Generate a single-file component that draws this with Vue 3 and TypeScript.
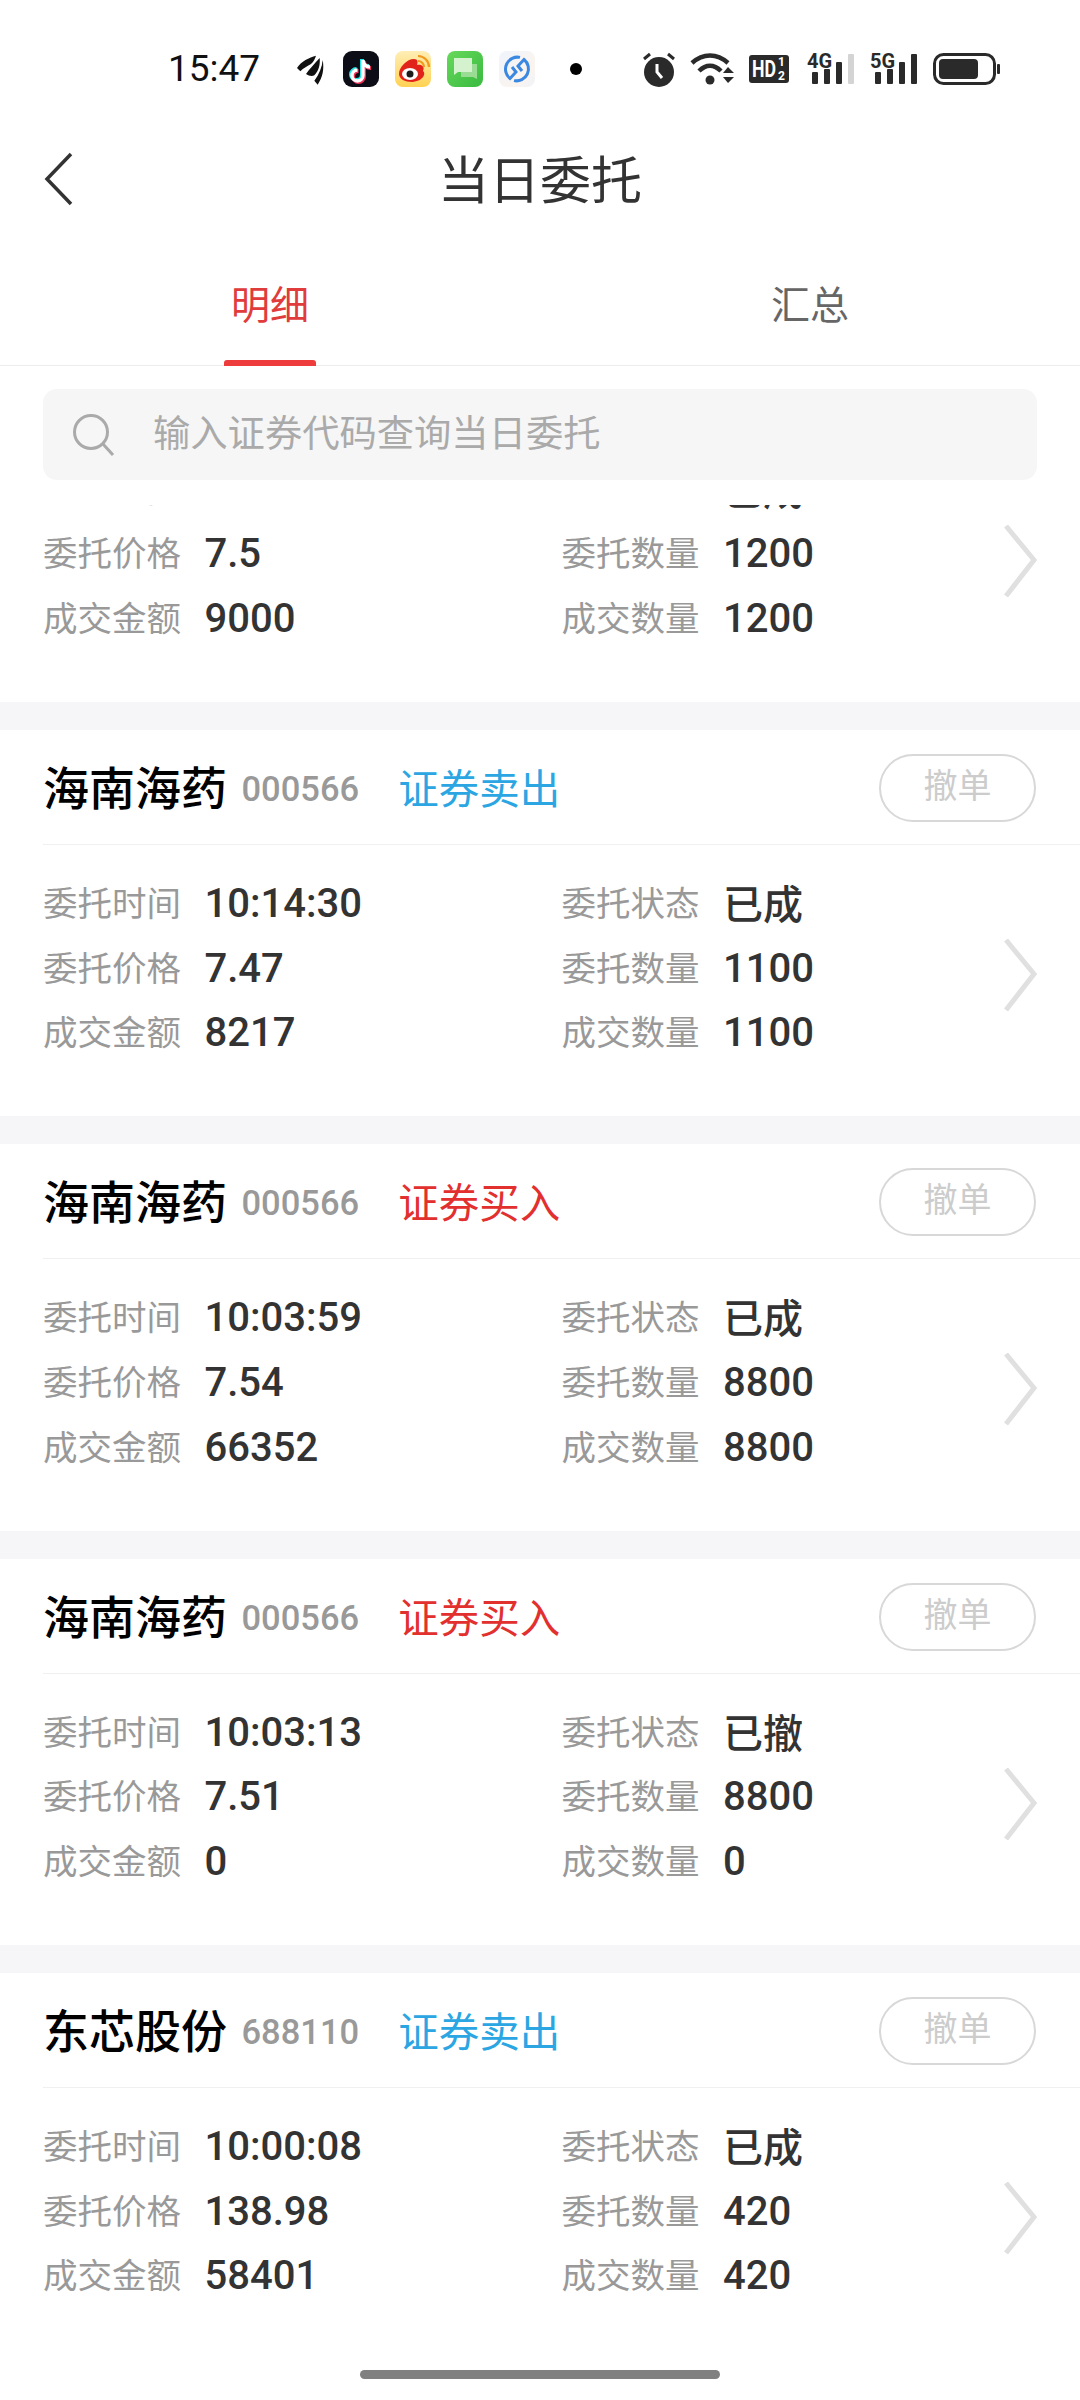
<template>
  <div class="page">
    <div class="status-bar">
      <span class="clock">15:47</span>
      <svg class="ic-bird" width="30" height="34" viewBox="0 0 90 100">
        <path d="M3 47C15 27 40 15 60 10C57 20 53 27 45 35C35 41 22 47 13 57Z" fill="#111" />
        <path d="M30 65C40 50 55 35 71 17C73 35 69 55 55 69C47 73 38 70 30 65Z" fill="#111" />
        <path d="M55 85C70 65 78 45 80 23C85 50 80 75 65 97Z" fill="#111" />
      </svg>
      <svg class="ic-app ic-tiktok" width="36" height="36" viewBox="0 0 36 36">
        <rect width="36" height="36" rx="9" fill="#0d0d17" />
        <path d="M19 8V23.5a5.5 5.5 0 1 1-5.5-5.5M19 8c0 4 3 7 7 7" fill="none" stroke="#25e6e6" stroke-width="4" />
        <path d="M21 10V25.5a5.5 5.5 0 1 1-5.5-5.5M21 10c0 4 3 7 7 7" fill="none" stroke="#f0305a" stroke-width="4" />
        <path d="M20 9V24.5a5.5 5.5 0 1 1-5.5-5.5M20 9c0 4 3 7 7 7" fill="none" stroke="#fff" stroke-width="3.4" />
      </svg>
      <svg class="ic-app" width="36" height="36" viewBox="0 0 36 36">
        <defs>
          <linearGradient id="wb" x1="0" y1="0" x2="0" y2="1">
            <stop offset="0" stop-color="#ffeeb5" />
            <stop offset="1" stop-color="#ffd253" />
          </linearGradient>
        </defs>
        <rect width="36" height="36" rx="8" fill="url(#wb)" />
        <path d="M4 23C4 16 12 8 19 8C23 8 23 11 22 14C27 13 30 16 28 20C31 22 29 30 17 31C10 31 4 28 4 23Z" fill="#e2231a" />
        <ellipse cx="15" cy="23" rx="8" ry="6" fill="#fff" />
        <circle cx="15" cy="23" r="3.5" fill="#1c1c1c" />
        <path d="M23 10a6 6 0 0 1 6 6M23 5a11 11 0 0 1 11 11" fill="none" stroke="#f29a1f" stroke-width="2.2" />
      </svg>
      <svg class="ic-app" width="36" height="36" viewBox="0 0 36 36">
        <defs>
          <linearGradient id="ms" x1="0" y1="0" x2="1" y2="1">
            <stop offset="0" stop-color="#66d95c" />
            <stop offset="1" stop-color="#39ba3f" />
          </linearGradient>
        </defs>
        <rect width="36" height="36" rx="8" fill="url(#ms)" />
        <path d="M14 13H30V28L26 26H14Z" fill="#9bdc94" />
        <path d="M7 7H25V21H11L7 24Z" fill="#d3f2cd" />
      </svg>
      <svg class="ic-app" width="36" height="36" viewBox="0 0 36 36">
        <defs>
          <linearGradient id="bl" x1="0" y1="0" x2="1" y2="1">
            <stop offset="0" stop-color="#eff4fd" />
            <stop offset="0.7" stop-color="#fbf4ee" />
            <stop offset="1" stop-color="#eef3fb" />
          </linearGradient>
        </defs>
        <rect width="36" height="36" rx="8" fill="url(#bl)" />
        <path d="M21 6.4A12 12 0 0 0 11 27.5L17 21L13 16" fill="none" stroke="#3b88e2" stroke-width="3" />
        <path d="M15 29.6A12 12 0 0 0 25 8.5L19 15L23 20" fill="none" stroke="#3b88e2" stroke-width="3" />
      </svg>
      <span class="dot"></span>
      <svg class="ic-alarm" width="32" height="35" viewBox="0 0 32 35">
        <circle cx="16" cy="20" r="15" fill="#2a2a2a" />
        <path d="M1 7L7 2M31 7L25 2" stroke="#2a2a2a" stroke-width="3" />
        <path d="M14 12V20L19 26" fill="none" stroke="#fff" stroke-width="3" />
      </svg>
      <svg class="ic-wifi" width="46" height="34" viewBox="0 0 46 34">
        <path d="M2 11C13 1 27 1 38 11M9 19C16 12 24 12 31 19" fill="none" stroke="#2a2a2a" stroke-width="4.5" />
        <circle cx="20" cy="28" r="4.5" fill="#2a2a2a" />
        <path d="M33 21L38 15L44 21ZM33 25H44L38 31Z" fill="#2a2a2a" />
      </svg>
      <svg class="ic-hd" width="40" height="28" viewBox="0 0 40 28">
        <rect width="40" height="28" rx="3" fill="#2a2a2a" />
        <text x="3" y="22" class="hd-text" textLength="24" lengthAdjust="spacingAndGlyphs">HD</text>
        <text x="29" y="10.5" class="hd-sub">1</text>
        <text x="29" y="25" class="hd-sub">2</text>
      </svg>
      <svg class="ic-signal" width="47" height="33" viewBox="0 0 47 33">
        <text x="-1" y="15" class="net-text">4G</text>
        <rect x="4" y="19" width="6" height="12" rx="1" fill="#2a2a2a" />
        <rect x="16" y="16" width="6" height="15" rx="1" fill="#2a2a2a" />
        <rect x="28" y="9" width="6" height="22" rx="1" fill="#2a2a2a" />
        <rect x="40" y="1" width="6" height="30" rx="1" fill="#d4d4d4" />
      </svg>
      <svg class="ic-signal ic-signal-5g" width="47" height="33" viewBox="0 0 47 33">
        <text x="-1" y="15" class="net-text">5G</text>
        <rect x="4" y="19" width="6" height="12" rx="1" fill="#2a2a2a" />
        <rect x="16" y="16" width="6" height="15" rx="1" fill="#2a2a2a" />
        <rect x="28" y="9" width="6" height="22" rx="1" fill="#2a2a2a" />
        <rect x="40" y="1" width="6" height="30" rx="1" fill="#2a2a2a" />
      </svg>
      <svg class="ic-battery" width="67" height="32" viewBox="0 0 67 32">
        <rect x="1.5" y="1.5" width="60" height="29" rx="9" fill="none" stroke="#2a2a2a" stroke-width="3" />
        <rect x="6" y="6" width="39" height="20" rx="4" fill="#2a2a2a" />
        <rect x="64" y="11" width="3" height="10" rx="1" fill="#2a2a2a" />
      </svg>
    </div>

    <div class="nav-bar">
      <svg class="back" width="30" height="54" viewBox="0 0 30 54">
        <path d="M27 2L3 27L27 52" fill="none" stroke="#333" stroke-width="3.5" />
      </svg>
      <h1 class="title">当日委托</h1>
    </div>

    <div class="tabs">
      <div class="tab active">明细</div>
      <div class="tab">汇总</div>
    </div>

    <div class="search-wrap">
      <div class="search">
        <svg class="search-icon" width="42" height="42" viewBox="0 0 42 42">
          <circle cx="18" cy="18" r="16.5" fill="none" stroke="#aaa" stroke-width="3" />
          <path d="M30 30L40 41" stroke="#aaa" stroke-width="3" />
        </svg>
        <span class="placeholder">输入证券代码查询当日委托</span>
      </div>
    </div>

    <div class="list">
      <div class="list-inner">
        <div v-for="(o, i) in orders" :key="i" class="card">
          <div class="card-head">
            <span class="name">{{ o.name }}</span>
            <span class="code">{{ o.code }}</span>
            <span class="side" :class="o.sell ? 'sell' : 'buy'">{{ o.sell ? '证券卖出' : '证券买入' }}</span>
            <button class="cancel">撤单</button>
          </div>
          <div class="card-body">
            <div class="field"><span class="label">委托时间</span><span class="value">{{ o.time }}</span></div>
            <div class="field"><span class="label">委托状态</span><span class="value status">{{ o.status }}</span></div>
            <div class="field"><span class="label">委托价格</span><span class="value">{{ o.price }}</span></div>
            <div class="field"><span class="label">委托数量</span><span class="value">{{ o.qty }}</span></div>
            <div class="field"><span class="label">成交金额</span><span class="value">{{ o.amount }}</span></div>
            <div class="field"><span class="label">成交数量</span><span class="value">{{ o.filled }}</span></div>
          </div>
          <svg class="chevron" width="34" height="72" viewBox="0 0 34 72">
            <path d="M2 1L30 35L2 71" fill="none" stroke="#e0e0e0" stroke-width="5" />
          </svg>
        </div>
      </div>
    </div>

    <div class="home-bar"></div>
  </div>
</template>

<script setup lang="ts">
interface Order {
  name: string;
  code: string;
  sell: boolean;
  time: string;
  status: string;
  price: string;
  qty: string;
  amount: string;
  filled: string;
}

const orders: Order[] = [
  { name: '海南海药', code: '000566', sell: true, time: '10:20:11', status: '已成', price: '7.5', qty: '1200', amount: '9000', filled: '1200' },
  { name: '海南海药', code: '000566', sell: true, time: '10:14:30', status: '已成', price: '7.47', qty: '1100', amount: '8217', filled: '1100' },
  { name: '海南海药', code: '000566', sell: false, time: '10:03:59', status: '已成', price: '7.54', qty: '8800', amount: '66352', filled: '8800' },
  { name: '海南海药', code: '000566', sell: false, time: '10:03:13', status: '已撤', price: '7.51', qty: '8800', amount: '0', filled: '0' },
  { name: '东芯股份', code: '688110', sell: true, time: '10:00:08', status: '已成', price: '138.98', qty: '420', amount: '58401', filled: '420' }
];
</script>

<style scoped>
.page {
  position: relative;
  display: flex;
  flex-direction: column;
  width: 1080px;
  height: 2400px;
  overflow: hidden;
  background: #fff;
  font-family: Roboto, "Noto Sans CJK SC", sans-serif;
}

.status-bar {
  display: flex;
  align-items: center;
  height: 100px;
  flex-shrink: 0;
  padding: 38px 0 0 168px;
  box-sizing: border-box;
  color: #111;
}

.status-bar > * {
  flex-shrink: 0;
}

.clock {
  width: 93px;
  font-size: 37px;
  line-height: 42px;
}

.ic-bird { margin-left: 35px; }
.ic-tiktok { margin-left: 17px; }
.ic-app + .ic-app { margin-left: 16px; }

.dot {
  width: 12px;
  height: 12px;
  margin-left: 35px;
  border-radius: 50%;
  background: #000;
}

.ic-alarm { margin-left: 61px; }
.ic-wifi { margin-left: 15px; }
.ic-hd { margin-left: 13px; }
.ic-signal { margin-left: 19px; overflow: visible; }
.ic-signal-5g { margin-left: 16px; }
.ic-battery { margin-left: 15px; }

.hd-text {
  font-family: Roboto, sans-serif;
  font-size: 23px;
  font-weight: 700;
  fill: #fff;
}

.hd-sub {
  font-family: Roboto, sans-serif;
  font-size: 12px;
  font-weight: 700;
  fill: #fff;
}

.net-text {
  font-family: Roboto, sans-serif;
  font-size: 20px;
  font-weight: 700;
  fill: #2a2a2a;
}

.nav-bar {
  position: relative;
  display: flex;
  align-items: center;
  justify-content: center;
  height: 160px;
  padding-bottom: 6px;
  box-sizing: border-box;
  flex-shrink: 0;
}

.back {
  position: absolute;
  left: 44px;
  top: 52px;
}

.title {
  margin: 0;
  font-size: 51px;
  font-weight: 400;
  color: #333;
}

.tabs {
  display: flex;
  height: 106px;
  flex-shrink: 0;
  box-sizing: border-box;
  border-bottom: 1px solid #ececec;
}

.tab {
  position: relative;
  flex: 1;
  padding-top: 18px;
  text-align: center;
  font-size: 39px;
  line-height: 56px;
  color: #666;
}

.tab.active {
  color: #e03c3c;
}

.tab.active::after {
  content: "";
  position: absolute;
  left: 224px;
  bottom: -1px;
  width: 92px;
  height: 6px;
  border-radius: 3px 3px 0 0;
  background: #ee3b3b;
}

.search-wrap {
  flex-shrink: 0;
  height: 139px;
  padding: 23px 43px 0;
  box-sizing: border-box;
}

.search {
  display: flex;
  align-items: center;
  height: 91px;
  padding-left: 30px;
  border-radius: 14px;
  background: #f6f6f6;
}

.placeholder {
  margin-left: 38px;
  margin-bottom: 7px;
  font-size: 37.3px;
  color: #aaa;
}

.list {
  flex: 1;
  overflow: hidden;
}

.list-inner {
  margin-top: -189.33px;
}

.card {
  position: relative;
  height: 414.33px;
  box-sizing: border-box;
  border-bottom: 28px solid #f6f6f8;
  background: #fff;
}

.card:last-child {
  border-bottom-color: #fff;
}

.card-head {
  display: flex;
  align-items: center;
  height: 114px;
  margin-left: 43px;
  padding-right: 44px;
  border-bottom: 1px solid #f0f0f0;
}

.name {
  margin-top: -4px;
  font-size: 46px;
  font-weight: 500;
  color: #000;
}

.code {
  margin-left: 14.5px;
  margin-top: 4px;
  font-size: 34.5px;
  font-weight: 500;
  color: #999;
}

.side {
  margin-left: 39px;
  margin-top: -1px;
  font-size: 40.5px;
}

.sell { color: #2ba6e2; }
.buy { color: #e2302f; }

.cancel {
  width: 157px;
  height: 68px;
  margin-left: auto;
  margin-top: 2px;
  padding: 0 0 9px;
  border: 2px solid #d8d8d8;
  border-radius: 34px;
  background: #fff;
  font-family: inherit;
  font-size: 34px;
  color: #ccc;
}

.card-body {
  display: grid;
  grid-template-columns: 518.5px 1fr;
  grid-auto-rows: 64.8px;
  padding: 25px 0 0 43px;
}

.field {
  display: flex;
  align-items: center;
}

.label {
  width: 161.5px;
  margin-top: -3px;
  font-size: 34.5px;
  color: #999;
}

.value {
  margin-top: 2px;
  font-size: 40px;
  font-weight: 500;
  color: #333;
}

.status {
  margin-top: -1px;
  font-size: 40px;
}

.chevron {
  position: absolute;
  right: 42px;
  top: 209px;
}

.home-bar {
  position: absolute;
  left: 360px;
  top: 2370px;
  width: 360px;
  height: 9px;
  border-radius: 5px;
  background: #808080;
}
</style>
